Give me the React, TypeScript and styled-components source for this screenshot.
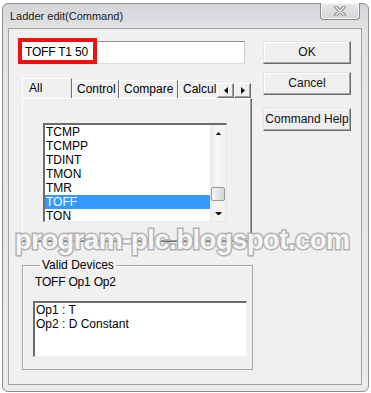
import React from 'react';
import styled, { createGlobalStyle } from 'styled-components';

const GlobalStyle = createGlobalStyle`
  html, body {
    margin: 0;
    padding: 0;
    background: #ffffff;
  }
  body {
    font-family: "Liberation Sans", Arial, sans-serif;
    font-size: 12px;
    color: #000;
  }
  #root {
    position: relative;
    width: 371px;
    height: 393px;
    overflow: hidden;
  }
`;

const Window = styled.div`
  box-sizing: border-box;
  margin: 3px 0 0 2px;
  width: 367px;
  height: 389px;
  border: 1px solid #8e8e8e;
  border-radius: 6px;
  background: linear-gradient(#d3d5d8, #e2e3e5 26px, #ebebec);
  display: flex;
  flex-direction: column;
`;

const TitleBar = styled.div`
  height: 24px;
  display: flex;
  align-items: flex-start;
  padding-left: 7px;
`;

const Title = styled.span`
  margin-top: 6px;
  font-size: 11px;
  line-height: 13px;
  color: #1a1a1a;
`;

const CloseButton = styled.div`
  margin: -1px 8px 0 auto;
  width: 40px;
  height: 17px;
  box-sizing: border-box;
  border: 1px solid #8a8a8a;
  border-top: none;
  border-radius: 0 0 4px 4px;
  background: linear-gradient(#e9e9ea, #d2d3d5);
  box-shadow: inset 0 0 0 1px rgba(255, 255, 255, 0.7);
  display: flex;
  align-items: center;
  justify-content: center;
`;

const Client = styled.div`
  flex: 1;
  margin: 0 6px 6px 5px;
  border: 1px solid #a3a3a3;
  background: #f0f0f0;
  display: flex;
  gap: 10px;
  padding: 12px 0 0 11px;
`;

const LeftColumn = styled.div`
  width: 233px;
  display: flex;
  flex-direction: column;
`;

const CommandField = styled.div`
  position: relative;
  width: 225px;
  height: 23px;
`;

const CommandInput = styled.div`
  box-sizing: border-box;
  width: 100%;
  height: 100%;
  background: #fff;
  border: 1px solid #abadb3;
  border-color: #8f8f8f #c9cbd0 #d9dbdf #c9cbd0;
  padding: 0 4px;
  font-size: 12px;
  line-height: 21px;
  letter-spacing: -0.2px;
`;

const RedMark = styled.div`
  position: absolute;
  left: -2px;
  top: -3px;
  width: 79px;
  height: 26px;
  box-sizing: border-box;
  border: 4px solid #ee1111;
`;

const TabControl = styled.div`
  margin: 14px 0 0 2px;
  width: 230px;
  display: flex;
  flex-direction: column;
`;

const TabStrip = styled.div`
  height: 20px;
  display: flex;
  align-items: flex-end;
`;

const TabRow = styled.div`
  width: 195px;
  height: 20px;
  display: flex;
  align-items: flex-end;
  overflow: hidden;
`;

const Tab = styled.div<{ $active?: boolean; $w: number }>`
  flex: 0 0 auto;
  box-sizing: border-box;
  width: ${(p) => p.$w}px;
  height: ${(p) => (p.$active ? 20 : 18)}px;
  border-top: 1px solid #fff;
  border-left: 1px solid ${(p) => (p.$active ? '#fff' : '#f8f8f8')};
  border-right: 1px solid #6e6e6e;
  padding-left: ${(p) => (p.$active ? 6 : 4)}px;
  line-height: ${(p) => (p.$active ? 18 : 16)}px;
  font-size: 12px;
  white-space: nowrap;
  background: #f0f0f0;
`;

const Scroller = styled.div`
  display: flex;
  height: 15px;
`;

const ScrollArrow = styled.div`
  box-sizing: border-box;
  width: 17px;
  height: 15px;
  border: 1px solid;
  border-color: #fff #6a6a6a #6a6a6a #fff;
  box-shadow: inset -1px -1px #a0a0a0;
  background: #f0f0f0;
  display: flex;
  align-items: center;
  justify-content: center;
`;

const TabPanel = styled.div`
  box-sizing: border-box;
  height: 144px;
  border: 1px solid;
  border-color: #fff #6a6a6a #6a6a6a #fff;
  box-shadow: inset -1px -1px #a0a0a0;
  padding: 24px 0 0 20px;
`;

const ListBox = styled.div`
  box-sizing: border-box;
  width: 184px;
  height: 99px;
  background: #fff;
  border-top: 2px solid #6c6c6c;
  border-left: 2px solid #6c6c6c;
  border-right: 1px solid #e8e8e8;
  border-bottom: 1px solid #e8e8e8;
  display: flex;
  overflow: hidden;
`;

const ListItems = styled.div`
  flex: 1;
  overflow: hidden;
`;

const ListItem = styled.div<{ $selected?: boolean }>`
  height: 14px;
  line-height: 14px;
  padding-left: 1px;
  font-size: 12px;
  color: ${(p) => (p.$selected ? '#fff' : '#000')};
  background: ${(p) => (p.$selected ? '#3399ff' : 'transparent')};
`;

const ScrollBar = styled.div`
  width: 16px;
  background: linear-gradient(90deg, #e9e9e9, #f5f5f5 40%, #f0f0f0);
  display: flex;
  flex-direction: column;
`;

const ScrollButton = styled.div`
  height: 16px;
  display: flex;
  align-items: center;
  justify-content: center;
`;

const Track = styled.div<{ $offset: number }>`
  flex: 1;
  padding-top: ${(p) => p.$offset}px;
  display: flex;
  justify-content: center;
`;

const Thumb = styled.div`
  box-sizing: border-box;
  width: 14px;
  height: 14px;
  border: 1px solid #979797;
  border-radius: 2px;
  background: linear-gradient(90deg, #f6f6f6, #e4e4e4 50%, #d6d6d6);
`;

const GroupBox = styled.fieldset`
  box-sizing: border-box;
  margin: 16px 0 0 2px;
  padding: 3px 0 0 12px;
  width: 231px;
  height: 112px;
  border: 1px solid #a6a6a6;
  box-shadow: inset 1px 1px #fbfbfb;
  min-width: 0;
`;

const Legend = styled.legend`
  margin-left: 5px;
  padding: 0 2px;
  font-size: 12px;
  line-height: 14px;
`;

const Syntax = styled.div`
  font-size: 12px;
  line-height: 14px;
  letter-spacing: -0.2px;
`;

const DevicesBox = styled.div`
  box-sizing: border-box;
  margin: 12px 0 0 -2px;
  width: 214px;
  height: 56px;
  background: #fff;
  border-top: 2px solid #6c6c6c;
  border-left: 2px solid #6c6c6c;
  border-right: 1px solid #f0f0f0;
  border-bottom: 1px solid #f0f0f0;
  padding: 0 1px;
`;

const DeviceLine = styled.div`
  font-size: 12px;
  line-height: 14px;
`;

const ButtonColumn = styled.div`
  width: 88px;
  display: flex;
  flex-direction: column;
`;

const Button = styled.div<{ $gap: number }>`
  box-sizing: border-box;
  margin-top: ${(p) => p.$gap}px;
  height: 23px;
  border: 1px solid;
  border-color: #e2e2e2 #6a6a6a #6a6a6a #e2e2e2;
  box-shadow: inset -1px -1px #a8a8a8, inset 1px 1px #fff;
  background: #efefef;
  font-size: 12px;
  line-height: 21px;
  text-align: center;
  color: #111;
`;

const WaterMark = styled.div`
  position: absolute;
  left: 15px;
  top: 227px;
  font-family: "Liberation Sans", Arial, sans-serif;
  font-weight: bold;
  font-size: 27px;
  line-height: 27px;
  letter-spacing: -0.3px;
  white-space: nowrap;
  color: rgba(252, 252, 252, 0.93);
  -webkit-text-stroke: 3px #b3b3b3;
  paint-order: stroke fill;
  pointer-events: none;
`;

const Triangle: React.FC<{ dir: 'up' | 'down' | 'left' | 'right'; size?: number }> = ({ dir, size = 4 }) => {
  const pts: Record<string, string> = {
    up: '0,4 7,4 3.5,0',
    down: '0,0 7,0 3.5,4',
    left: '4,0 4,7 0,3.5',
    right: '0,0 0,7 4,3.5',
  };
  const horiz = dir === 'up' || dir === 'down';
  const w = horiz ? 7 : size;
  const h = horiz ? size : 7;
  return (
    <svg width={w} height={h} viewBox={`0 0 ${w} ${h}`}>
      <polygon points={pts[dir]} fill="#111" />
    </svg>
  );
};

const items = ['TCMP', 'TCMPP', 'TDINT', 'TMON', 'TMR', 'TOFF', 'TON'];
const tabs = [
  { label: 'Control', w: 47 },
  { label: 'Compare', w: 59 },
  { label: 'Calcul', w: 45 },
];

export default function App() {
  return (
    <>
      <GlobalStyle />
      <Window>
        <TitleBar>
          <Title>Ladder edit(Command)</Title>
          <CloseButton>
            <svg width="12" height="10" viewBox="0 0 12 10">
              <path
                d="M2 1 L10 9 M10 1 L2 9"
                stroke="#7d7d7d"
                strokeWidth="3.4"
                strokeLinecap="round"
              />
              <path d="M2 1 L10 9 M10 1 L2 9" stroke="#f4f4f4" strokeWidth="1.6" strokeLinecap="round" />
            </svg>
          </CloseButton>
        </TitleBar>
        <Client>
          <LeftColumn>
            <CommandField>
              <CommandInput>TOFF T1 50</CommandInput>
              <RedMark />
            </CommandField>

            <TabControl>
              <TabStrip>
                <TabRow>
                  <Tab $active $w={50}>All</Tab>
                  {tabs.map((t) => (
                    <Tab key={t.label} $w={t.w}>
                      {t.label}
                    </Tab>
                  ))}
                </TabRow>
                <Scroller>
                  <ScrollArrow>
                    <Triangle dir="left" />
                  </ScrollArrow>
                  <ScrollArrow>
                    <Triangle dir="right" />
                  </ScrollArrow>
                </Scroller>
              </TabStrip>
              <TabPanel>
                <ListBox>
                  <ListItems>
                    {items.map((it) => (
                      <ListItem key={it} $selected={it === 'TOFF'}>
                        {it}
                      </ListItem>
                    ))}
                  </ListItems>
                  <ScrollBar>
                    <ScrollButton>
                      <Triangle dir="up" size={3} />
                    </ScrollButton>
                    <Track $offset={46}>
                      <Thumb />
                    </Track>
                    <ScrollButton>
                      <Triangle dir="down" size={3} />
                    </ScrollButton>
                  </ScrollBar>
                </ListBox>
              </TabPanel>
            </TabControl>

            <GroupBox>
              <Legend>Valid Devices</Legend>
              <Syntax>TOFF Op1 Op2</Syntax>
              <DevicesBox>
                <DeviceLine>Op1 : T</DeviceLine>
                <DeviceLine>Op2 : D Constant</DeviceLine>
              </DevicesBox>
            </GroupBox>
          </LeftColumn>

          <ButtonColumn>
            <Button $gap={0}>OK</Button>
            <Button $gap={8}>Cancel</Button>
            <Button $gap={13}>Command Help</Button>
          </ButtonColumn>
        </Client>
      </Window>
      <WaterMark>program-plc.blogspot.com</WaterMark>
    </>
  );
}
